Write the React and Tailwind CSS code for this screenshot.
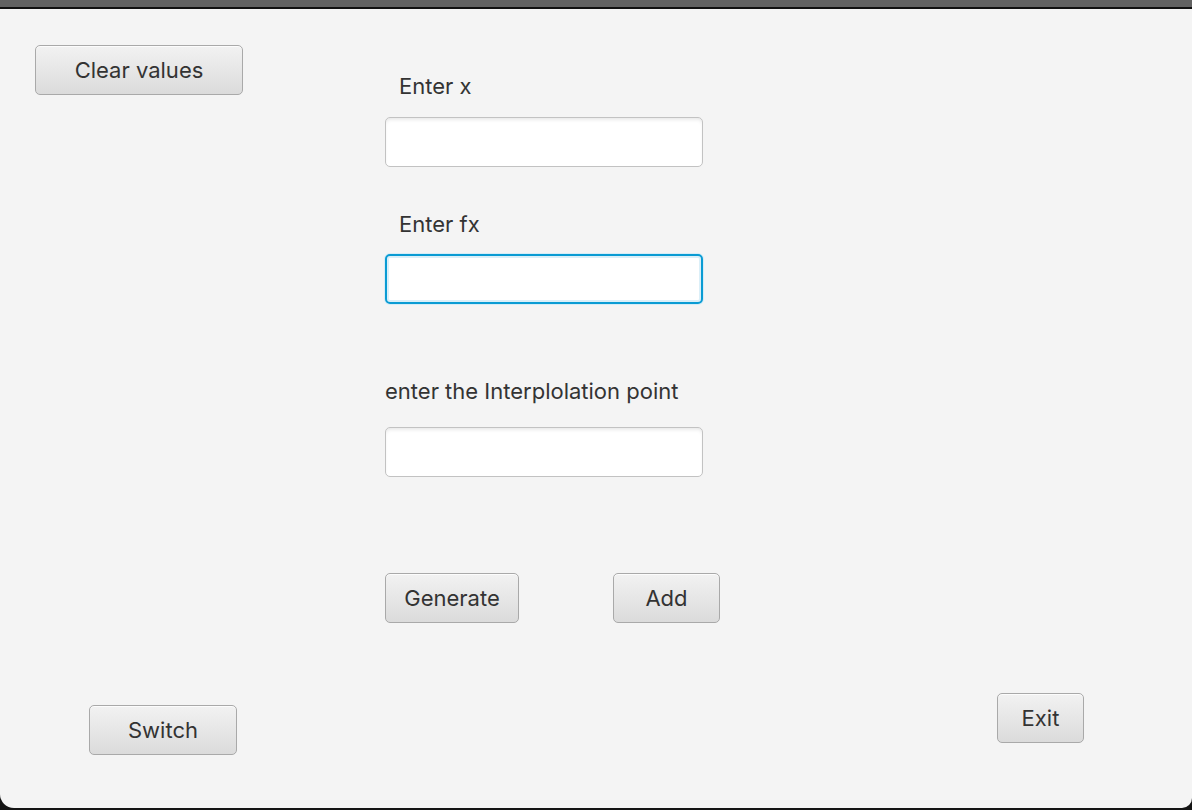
import React, { useState } from "react";

const font = { fontFamily: "Inter, 'Open Sans', sans-serif" };

const FxButton = ({ children, className }) => (
  <button
    type="button"
    className={
      "h-[50px] shrink-0 rounded-[5px] border-[1.5px] border-[#a9a9a9] bg-gradient-to-b from-[#f2f2f2] to-[#dbdbdb] text-[22px] leading-none text-[#333333] shadow-[inset_0_1px_0_#fcfcfc] " +
      className
    }
  >
    {children}
  </button>
);

const FxInput = ({ focused, value, onChange }) => (
  <input
    type="text"
    value={value}
    onChange={onChange}
    className={
      focused
        ? "block h-[50px] w-[318px] rounded-[5px] border-2 border-[#0a9bd3] bg-white px-2 text-[20px] outline-none shadow-[inset_0_0_0_2px_#dbeff8,0_0_0_1px_#d6edf7]"
        : "block h-[50px] w-[318px] rounded-[5px] border-[1.5px] border-[#c2c2c2] bg-white px-2 text-[20px] outline-none shadow-[inset_0_3px_4px_-2px_#e0e0e0]"
    }
  />
);

export default function App() {
  const [form, setForm] = useState({ x: "", fx: "", point: "" });

  const handleChange = (name) => (e) => {
    const { value } = e.target;
    setForm((prev) => ({ ...prev, [name]: value }));
  };

  return (
    <div className="h-[810px] w-[1192px] overflow-hidden bg-[#141414]" style={font}>
      {/* window top bar */}
      <div className="h-[7px] bg-[#626262]" />
      <div className="h-[2px] bg-[#111111]" />

      {/* content pane */}
      <div className="flex h-[799px] rounded-bl-[14px] rounded-br-[10px] bg-[#f4f4f4] text-[#333333]">
        {/* left column */}
        <div className="flex w-[385px] shrink-0 flex-col justify-between">
          <FxButton className="ml-[35px] mt-[36px] w-[208px]">Clear values</FxButton>
          <FxButton className="mb-[53px] ml-[89px] w-[148px]">Switch</FxButton>
        </div>

        {/* center column */}
        <div className="flex w-[318px] shrink-0 flex-col pt-[64px]">
          <label className="block h-[26px] pl-[14px] text-[22px] leading-[26px]">Enter x</label>
          <div className="mt-[18px]">
            <FxInput value={form.x} onChange={handleChange("x")} />
          </div>

          <label className="mt-[44px] block h-[26px] pl-[14px] text-[22px] leading-[26px]">Enter fx</label>
          <div className="mt-[17px]">
            <FxInput focused value={form.fx} onChange={handleChange("fx")} />
          </div>

          <label className="mt-[74px] block h-[26px] whitespace-nowrap text-[22px] leading-[26px]">
            enter the Interplolation point
          </label>
          <div className="mt-[23px]">
            <FxInput value={form.point} onChange={handleChange("point")} />
          </div>

          <div className="mt-[96px] flex w-max">
            <FxButton className="w-[134px]">Generate</FxButton>
            <FxButton className="ml-[94px] w-[107px]">Add</FxButton>
          </div>
        </div>

        {/* right column */}
        <div className="flex flex-1 flex-col justify-end">
          <FxButton className="mb-[65px] ml-[294px] w-[87px]">Exit</FxButton>
        </div>
      </div>
    </div>
  );
}
